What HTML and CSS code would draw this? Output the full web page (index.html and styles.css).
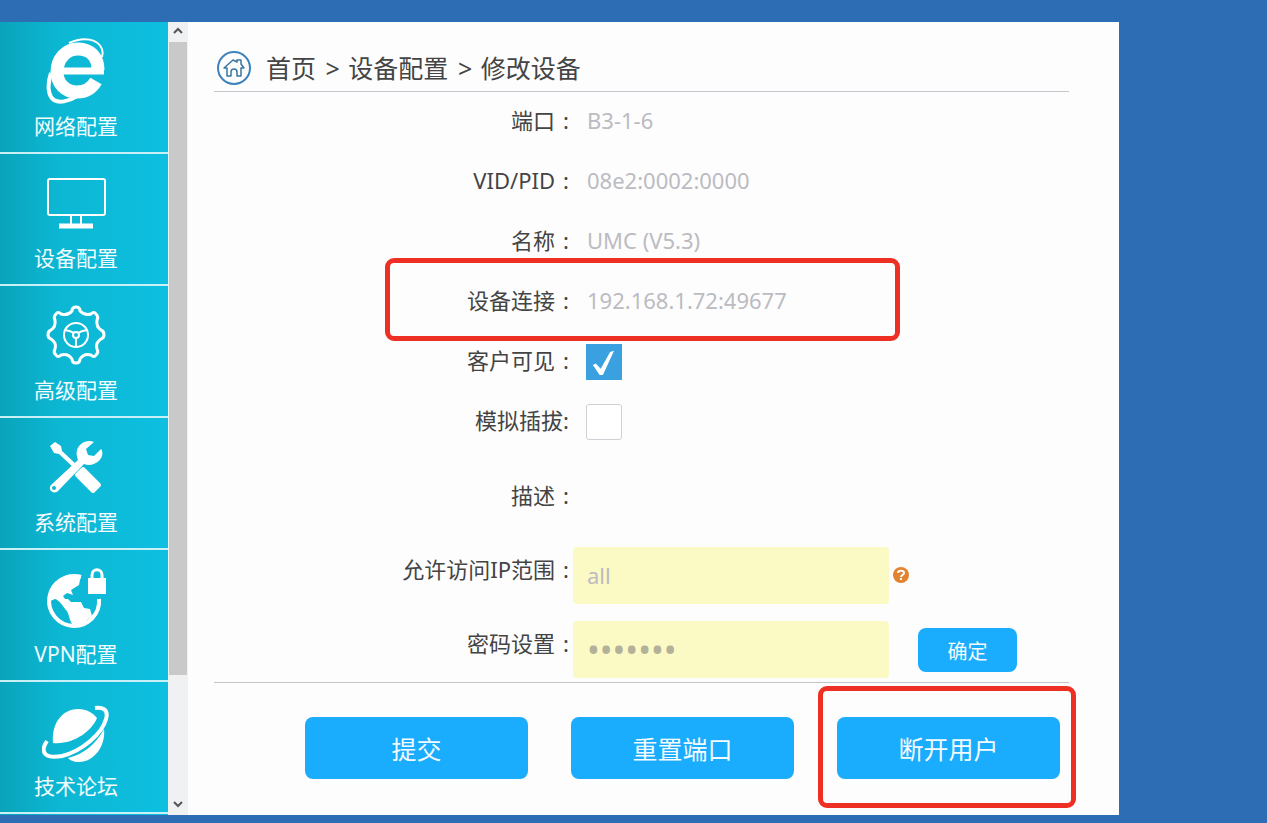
FILE: index.html
```html
<!DOCTYPE html>
<html lang="zh-CN">
<head>
    <meta charset="UTF-8">
    <meta name="viewport" content="width=device-width, initial-scale=1.0">
    <title>修改设备</title>
    <link rel="stylesheet" href="styles.css">
</head>
<body>
    <div class="window">
        <nav class="sidebar">
            <a href="#" class="nav-item">
                <svg class="nav-icon" viewBox="0 0 68 68" fill="none" stroke="#fff">
                    <path d="M54 45C50 52 43 56 35 56C23 56 15 47 15 36C15 23 24 13 36 13C48 13 56 21 56 34" stroke-width="13"/>
                    <path d="M19 35H62" stroke-width="7"/>
                    <path d="M27 7C42 0 56 3 60 13C61 16 61 18 60 21" stroke-width="2"/>
                    <path d="M9 37C5 49 6 60 12 64C17 67 26 66 35 60" stroke-width="4"/>
                </svg>
                <span>网络配置</span>
            </a>
            <a href="#" class="nav-item">
                <svg class="nav-icon" viewBox="0 0 68 68" fill="none" stroke="#fff" stroke-width="2">
                    <rect x="6" y="11" width="57" height="36" rx="2"/>
                    <path d="M29 47V56M39 47V56"/>
                    <path d="M17 58H51" stroke-width="5"/>
                </svg>
                <span>设备配置</span>
            </a>
            <a href="#" class="nav-item">
                <svg class="nav-icon" viewBox="0 0 68 68" fill="none" stroke="#fff" stroke-width="3" stroke-linejoin="round">
                    <path d="M30 11Q30 7 34 7Q38 7 38 11Q43 16 49 14Q52 11 54 14Q57 17 55 20Q54 27 59 30Q62 31 62 35Q62 38 59 39Q53 43 55 49Q57 52 54 55Q52 58 49 55Q42 53 38 59Q38 63 34 63Q30 63 30 59Q26 53 19 55Q16 58 14 55Q11 52 13 49Q15 43 9 39Q6 38 6 35Q6 31 9 30Q14 27 13 20Q11 17 14 14Q16 11 19 14Q26 16 30 11Z"/>
                    <g stroke-width="2">
                        <circle cx="34" cy="35" r="12"/>
                        <circle cx="34" cy="35" r="3"/>
                        <path d="M23 30Q29 31 32 33M45 30Q39 31 36 33M34 38V47"/>
                    </g>
                </svg>
                <span>高级配置</span>
            </a>
            <a href="#" class="nav-item">
                <svg class="nav-icon" viewBox="0 0 68 68" fill="#fff">
                    <path d="M8 14L13 10L19 14L20 19L36 34L33 37L17 22L12 21Z"/>
                    <path d="M41 37L57 53L51 59L35 43Z" stroke="#fff" stroke-width="4" stroke-linejoin="round"/>
                    <path fill-rule="evenodd" d="M52 10C44 7 37 12 35 18C34 22 35 25 36 28L9 53C5 58 12 63 16 59L42 32C50 35 58 30 60 24C61 21 60 18 59 17L52 24L46 23L44 17ZM12 54A2 2 0 1 1 12 58A2 2 0 1 1 12 54Z"/>
                </svg>
                <span>系统配置</span>
            </a>
            <a href="#" class="nav-item">
                <svg class="nav-icon" viewBox="0 0 68 68" fill="none">
                    <path d="M39 13A25 25 0 1 0 57 35" stroke="#fff" stroke-width="4"/>
                    <path fill="#fff" d="M39 11C18 9 5 22 6 38L13 35C17 36 20 41 24 46C27 49 27 55 30 60C37 66 43 61 45 56L50 52L48 45L42 44L39 38H29L26 35H23L21 32L25 29L31 31L29 26L37 21Z"/>
                    <path fill="#fff" d="M46 14H64V30H46Z"/>
                    <path d="M50 16V11C50 4 60 4 60 11V16" stroke="#fff" stroke-width="3"/>
                </svg>
                <span>VPN配置</span>
            </a>
            <a href="#" class="nav-item">
                <svg class="nav-icon" viewBox="0 0 68 68" fill="none">
                    <path fill="#fff" d="M11 47C9 28 20 13 36 13C45 13 51 17 55 22C50 35 31 49 11 47Z"/>
                    <path fill="#fff" d="M62 33C64 50 52 66 37 66C31 66 28 64 26 62C42 58 54 48 62 33Z"/>
                    <path d="M5 45C-3 57 4 63 20 60C40 55 60 38 64 23C67 13 60 11 53 12" stroke="#fff" stroke-width="4"/>
                </svg>
                <span>技术论坛</span>
            </a>
        </nav>

        <div class="scrollbar">
            <button type="button" class="scroll-arrow" aria-label="向上">
                <svg viewBox="0 0 12 12"><path d="M2 8L6 4L10 8"/></svg>
            </button>
            <div class="scroll-thumb"></div>
            <div class="scroll-rest"></div>
            <button type="button" class="scroll-arrow" aria-label="向下">
                <svg viewBox="0 0 12 12"><path d="M2 4L6 8L10 4"/></svg>
            </button>
        </div>

        <main class="main">
            <div class="breadcrumb">
                <svg class="home-icon" viewBox="0 0 36 36" fill="none">
                    <circle cx="18" cy="18" r="16" stroke="#3e82bd" stroke-width="2"/>
                    <path d="M8 18L17 10L21 12V10H25V14L28 18H25V26H21V22C21 18 15 18 15 22V26H11V18Z" stroke="#39759f" stroke-width="1.5" stroke-linejoin="round"/>
                </svg>
                <div>
                    <a href="#">首页</a>
                    <span class="sep">&gt;</span>
                    <a href="#">设备配置</a>
                    <span class="sep">&gt;</span>
                    修改设备
                </div>
            </div>

            <form class="device-form">
                <div class="form-row">
                    <label for="port">端口<span class="colon">:</span></label>
                    <input type="text" id="port" class="form-input" value="B3-1-6" readonly>
                </div>
                <div class="form-row">
                    <label for="vid">VID/PID<span class="colon">:</span></label>
                    <input type="text" id="vid" class="form-input" value="08e2:0002:0000" readonly>
                </div>
                <div class="form-row">
                    <label for="name">名称<span class="colon">:</span></label>
                    <input type="text" id="name" class="form-input" value="UMC (V5.3)" readonly>
                </div>
                <div class="form-row marked">
                    <label for="link">设备连接<span class="colon">:</span></label>
                    <input type="text" id="link" class="form-input" value="192.168.1.72:49677" readonly>
                </div>
                <div class="form-row">
                    <label for="visible">客户可见<span class="colon">:</span></label>
                    <input type="checkbox" id="visible" class="form-check" checked>
                </div>
                <div class="form-row">
                    <label for="plug">模拟插拔:</label>
                    <input type="checkbox" id="plug" class="form-check">
                </div>
                <div class="form-row desc-row">
                    <label for="desc">描述<span class="colon">:</span></label>
                    <input type="text" id="desc" class="form-input">
                </div>
                <div class="form-row fill-row">
                    <label for="ip">允许访问IP范围<span class="colon">:</span></label>
                    <input type="text" id="ip" class="form-input filled" value="all">
                    <svg class="help-icon" viewBox="0 0 16 16" fill="none">
                        <circle cx="8" cy="8" r="8" fill="#e3822f"/>
                        <path d="M5 6C5 3 11 3 11 6C11 8 8 8 8 10M8 11V13" stroke="#fff" stroke-width="2"/>
                    </svg>
                </div>
                <div class="form-row fill-row">
                    <label for="pwd">密码设置<span class="colon">:</span></label>
                    <input type="password" id="pwd" class="form-input filled" value="1234567">
                    <button type="button" class="btn btn-small">确定</button>
                </div>

                <div class="button-group">
                    <button type="submit" class="btn">提交</button>
                    <button type="button" class="btn">重置端口</button>
                    <button type="button" class="btn btn-marked">断开用户</button>
                </div>
            </form>
        </main>
    </div>
</body>
</html>
```
FILE: styles.css
```css
* {
    margin: 0;
    padding: 0;
    box-sizing: border-box;
}

body {
    font-family: "Noto Sans", "Noto Sans CJK SC", sans-serif;
    background-color: #2d6db3;
    color: #444;
    padding-top: 22px;
}

a {
    color: inherit;
    text-decoration: none;
}

.window {
    display: flex;
    margin-right: 148px;
    background-color: #fdfdfd;
}

.sidebar {
    width: 168px;
    flex-shrink: 0;
    background: linear-gradient(to right, #0aa3bb, #0cb7d3 35%, #0ebfe0);
}

.nav-item {
    display: flex;
    flex-direction: column;
    align-items: center;
    gap: 10px;
    height: 132px;
    padding: 14px 16px 0 0;
    border-bottom: 2px solid #c9f0f7;
    color: #f2fcfe;
    font-size: 21px;
    line-height: 24px;
}

.nav-icon {
    width: 68px;
    height: 68px;
}

.scrollbar {
    display: flex;
    flex-direction: column;
    width: 20px;
    flex-shrink: 0;
    background-color: #f0f1f2;
}

.scroll-arrow {
    height: 20px;
    border: none;
    background: none;
}

.scroll-arrow svg {
    width: 12px;
    height: 12px;
    fill: none;
    stroke: #555;
    stroke-width: 2;
}

.scroll-thumb {
    flex: 84;
    margin: 0 1px;
    background-color: #cac9ca;
}

.scroll-rest {
    flex: 16;
}

.main {
    flex: 1;
    padding: 0 50px 0 26px;
}

.breadcrumb {
    display: flex;
    align-items: center;
    gap: 14px;
    height: 70px;
    padding-top: 22px;
    border-bottom: 1px solid #c6c6ce;
    font-size: 25px;
    line-height: 46px;
}

.sep {
    margin: 0 2px 0 3px;
}

.home-icon {
    width: 36px;
    height: 36px;
    margin-left: 2px;
}

.form-row {
    position: relative;
    display: flex;
    align-items: center;
    gap: 4px;
    height: 60px;
    font-size: 22px;
}

.form-row label {
    width: 355px;
    flex-shrink: 0;
    padding-bottom: 4px;
    text-align: right;
    line-height: 44px;
}

.colon {
    margin-left: 8px;
}

.form-input {
    width: 316px;
    height: 57px;
    padding: 0 14px 4px;
    border: none;
    outline: none;
    background: none;
    color: #bbbbc1;
    font-family: inherit;
    font-size: 22px;
}

.filled {
    padding-bottom: 2px;
    border-radius: 4px;
    background-color: #fcfac4;
}

.filled[type="password"] {
    color: #b3b199;
    font-size: 34px;
}

.form-check {
    appearance: none;
    width: 36px;
    height: 36px;
    margin-left: 13px;
    border: 1px solid #cfcfd6;
    border-radius: 3px;
    background-color: #fff;
}

.form-check:checked {
    display: flex;
    border: none;
    border-radius: 0;
    background-color: #3aa0df;
}

/* tick: a thick polygon, short arm left, long arm up right */
.form-check:checked::before {
    content: "";
    width: 36px;
    height: 36px;
    background-color: #fff;
    clip-path: polygon(19% 58%, 27% 54%, 41% 69%, 67% 22%, 78% 19%, 47% 86%, 38% 86%);
}

.desc-row {
    height: 90px;
}

.fill-row {
    align-items: flex-start;
    height: 74px;
    padding-top: 5px;
}

.fill-row:nth-last-child(2) {
    height: 66px;
}

.help-icon {
    width: 16px;
    height: 16px;
    margin-top: 20px;
}

.btn {
    position: relative;
    width: 223px;
    height: 62px;
    border: none;
    border-radius: 8px;
    background-color: #1aacfd;
    color: #f4fbff;
    font-family: inherit;
    font-size: 25px;
    cursor: pointer;
}

.btn-small {
    width: 99px;
    height: 44px;
    margin: 7px 0 0 25px;
    font-size: 20px;
}

.button-group {
    display: flex;
    justify-content: flex-end;
    gap: 43px;
    padding: 34px 9px 36px 0;
    border-top: 1px solid #c6c6ca;
}

/* red highlight frames */
.marked::after,
.btn-marked::after {
    content: "";
    position: absolute;
    border: 5px solid #ee3024;
    border-radius: 9px;
    pointer-events: none;
}

.marked::after {
    inset: -14px 169px -9px 171px;
}

.btn-marked::after {
    inset: -31px -16px -29px -19px;
}
```
